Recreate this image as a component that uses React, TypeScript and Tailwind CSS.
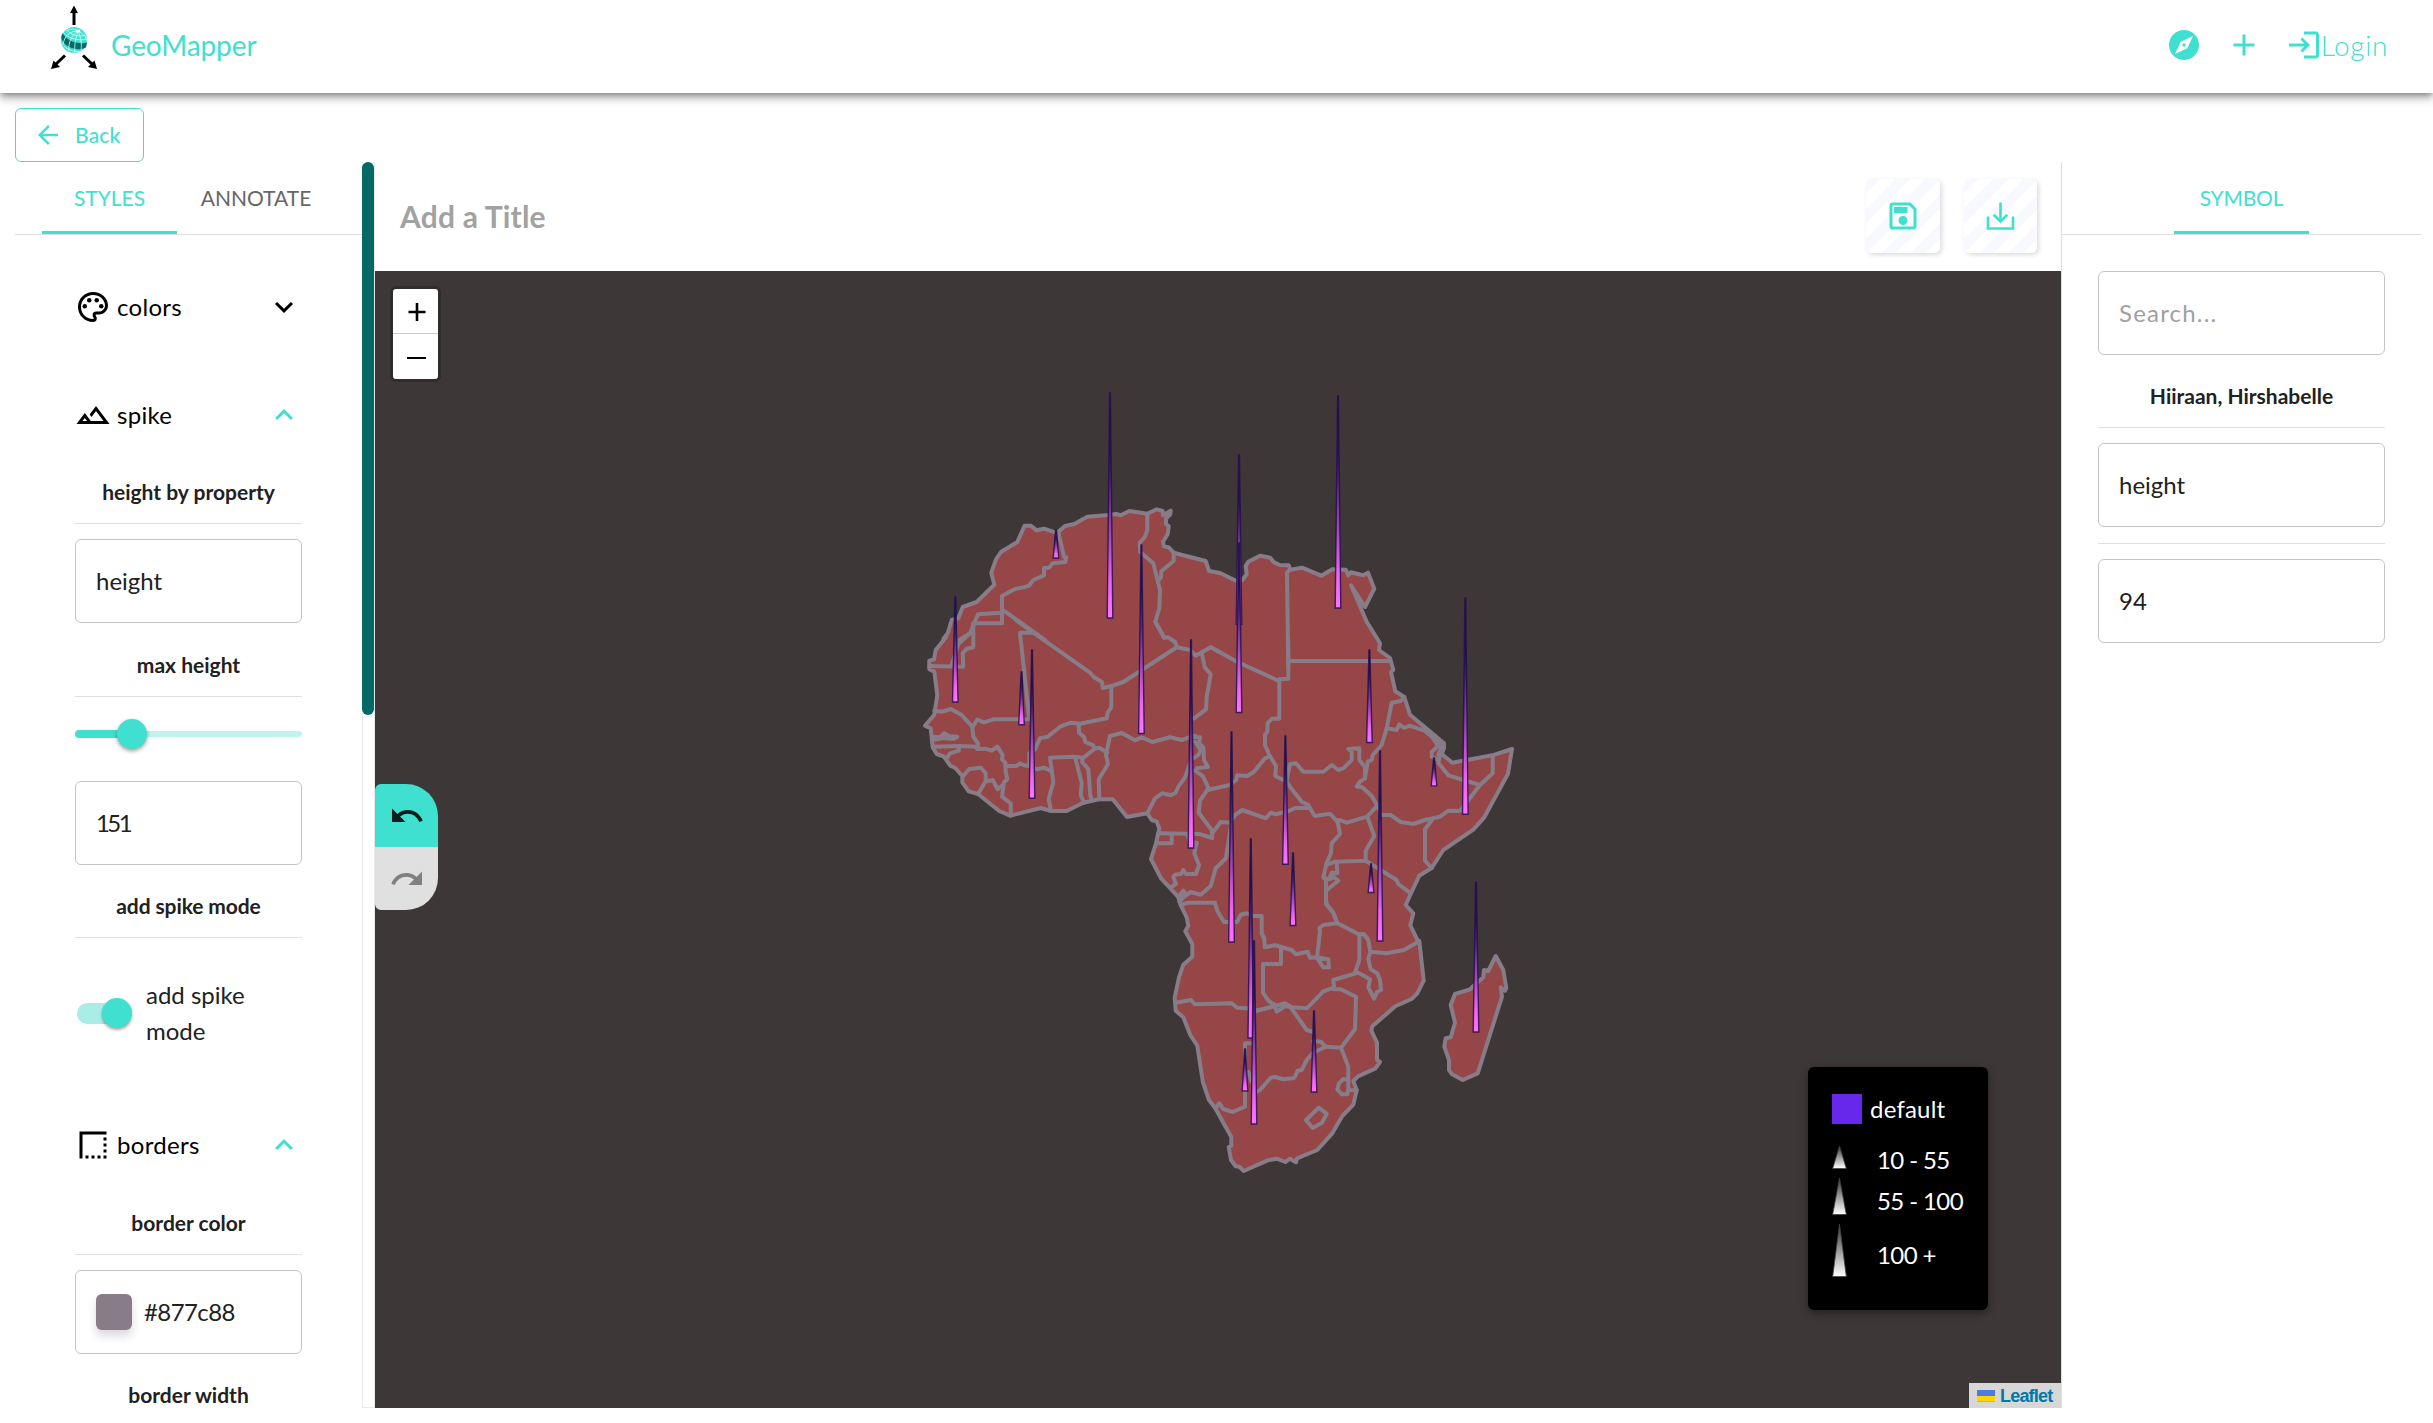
import React from "react";
import {
  MdExplore,
  MdAdd,
  MdLogin,
  MdOutlinePalette,
  MdOutlineLandscape,
  MdBorderStyle,
  MdExpandMore,
  MdExpandLess,
  MdArrowBack,
  MdOutlineSave,
  MdUndo,
  MdRedo,
} from "react-icons/md";

type Tile = [number, number];

// Map geometry is digitised in tiles; every tile unit is a third of a pixel.
const A: Tile = [900, 370];
const B: Tile = [1180, 370];
const C: Tile = [900, 620];
const D: Tile = [1130, 640];
const E: Tile = [1130, 900];
const ORIGIN: Tile = [375, 271];

const pts = ([ox, oy]: Tile, s: string) =>
  s
    .trim()
    .split(/\s+/)
    .map((p) => {
      const [x, y] = p.split(",").map(Number);
      return `${(ox + x / 3 - ORIGIN[0]).toFixed(1)},${(oy + y / 3 - ORIGIN[1]).toFixed(1)}`;
    })
    .join(" ");

const MAINLAND = [
  pts(A, "130,808 143,790 155,750 175,745 188,711 230,696 283,644 274,608 288,568 304,545 352,516 374,467 392,467 410,481 432,476 466,487 475,485 495,468 523,462 562,440 625,435 648,432 662,436 688,423 742,431 770,418 788,423 789,436 812,422 811,433 798,446 798,462 806,468 803,493 789,515 792,529 806,532 821,548 917,573 927,603 960,609"),
  pts(B, "168,632 187,630 200,613 197,588 205,575 240,557 271,563 280,575 299,585 326,586 331,599 366,593 424,617 457,598 497,599 505,616 512,607 550,616 564,608 583,656 555,711 513,646 560,755 600,820 597,840 630,864"),
  pts(D, "790,90 783,96 796,154 823,171 840,224 890,266 942,310 942,325 935,342 967,368 1087,346 1146,327 1134,401 1062,533 1030,569 940,630 905,684 868,707 842,762 827,795 850,820 841,856 863,902"),
  pts(E, "868,122 881,242 862,280 846,296 796,319 727,379 724,392 741,428 741,480 750,486 735,506 684,529 670,543 680,571 670,614 637,648 606,701 562,750 501,775 498,787 480,776 466,786 440,776 413,781 341,813 328,800 317,799 303,780 296,741 304,737 304,711 256,625 237,600 219,548 202,437 181,405 160,352 137,332 134,293 147,232 160,194 187,170 187,132 166,94 175,78 170,52 152,15"),
  pts(D, "144,770 94,716 63,657 78,610 88,565 80,545 65,540 52,520"),
  pts(C, "681,591 638,538 597,538 550,548 500,573 453,573 422,564 330,587 298,573 234,522 206,514 187,487 187,468 166,444 151,437 132,410 110,402 98,382 97,372 92,325 75,317 103,284 112,225 103,155 88,148 88,122 102,118 107,90 138,52"),
].join(" ");

const MADAGASCAR = pts(E, "1097,168 1120,210 1129,265 1125,272 1112,262 1116,290 1043,520 998,540 965,522 957,510 957,480 943,440 947,415 962,412 975,368 962,315 975,282 1020,268 1060,232 1062,210 1075,213");

const BORDERS: [Tile, string][] = [
  [A, "475,485 492,560 499,562 496,576 458,580 447,593 432,594 432,616 400,630 388,646 375,651 345,657 306,678 306,760 223,760"],
  [A, "306,728 234,733 210,790 178,810"],
  [A, "306,718 435,810"],
  [A, "742,431 742,480 735,500 719,518 721,546 760,580 780,660 778,715 766,755 793,803"],
  [A, "821,548 821,573 784,604 783,622 775,632"],
  [C, "220,10 220,82 200,86 188,100 190,140 88,138"],
  [C, "220,10 215,35 175,72 155,135"],
  [C, "347,0 400,38 570,158 582,172 606,186 608,204 634,198 670,186 830,82"],
  [C, "400,38 360,38 388,298 280,298 252,307 232,299 217,322"],
  [C, "103,272 127,275 152,267 185,285 217,320 220,350 235,372 232,387"],
  [C, "97,350 120,352 133,340 147,348 172,350 160,357 130,354 97,360"],
  [C, "98,380 178,378 232,380"],
  [C, "178,378 176,392 150,400 142,412"],
  [C, "232,387 255,386 275,392 292,380 308,405 306,418 316,428 317,455 322,478 312,487 306,530 332,550 332,585"],
  [C, "190,467 208,447 243,443 257,460 257,484 234,522"],
  [C, "257,484 278,480 293,508 308,495"],
  [C, "317,438 350,438 360,430 372,436 388,438 388,400 405,388 420,355 443,350 480,320 512,308 540,311 620,295 623,278 634,262 634,200"],
  [C, "388,436 410,448 432,443 452,452"],
  [C, "536,311 537,338 553,352 556,366 580,376 582,386 598,383 622,398"],
  [C, "582,388 550,413 520,410 450,413 460,487 446,537 453,573"],
  [C, "526,413 545,490 542,525 552,548"],
  [C, "547,415 547,427 565,447 571,527 576,542"],
  [C, "598,538 596,478 624,432 618,405 630,348 665,339 705,361 725,352 757,366 810,352 845,360 885,347"],
  [C, "766,5 793,53 805,52 825,66 832,82 870,90 887,107 932,82 960,97"],
  [D, "242,22 327,68 445,122 448,118 475,116 475,0"],
  [B, "325,895 321,607 331,599"],
  [D, "475,63 780,63"],
  [D, "448,118 448,236 425,236 413,250 412,275 405,285 405,315 418,345 438,378 436,408 470,425 480,440 515,485 535,495 552,525"],
  [D, "215,38 224,82 242,103 230,170 228,208 192,235"],
  [D, "180,290 210,292 207,310 220,322 222,360 234,381 200,385"],
  [D, "195,305 212,330 205,345 190,355"],
  [D, "52,520 75,475 97,460 122,466 137,458 145,440 165,412 180,370"],
  [D, "195,392 218,408 234,440 232,450 210,482 206,518 245,570 247,594 207,582 88,580"],
  [D, "232,450 300,435 318,420 322,406 352,408 372,395 405,355 418,350"],
  [D, "247,580 272,546 300,548 315,525 337,510 408,535 422,518 438,523 478,512 495,504 535,504"],
  [D, "302,560 288,655 257,685 242,738 212,764 182,756 165,768 148,785"],
  [D, "145,770 160,752 168,762 150,780"],
  [D, "78,610 125,610 125,582"],
  [D, "172,582 180,608 200,608 193,640 207,675 198,702 168,702 160,690 153,702 135,704 130,710 138,732 122,742"],
  [D, "152,795 175,788 255,788 262,812 282,846 322,846 332,824 350,820 370,828 395,828 395,880 403,895"],
  [E, "395,100 403,115 404,142 435,136 485,150 498,163 533,155 540,173 560,172 595,178 597,202 580,202 560,172"],
  [E, "453,145 453,192 399,192 399,278 415,302 435,315"],
  [E, "562,165 570,95 568,85 580,75 620,70"],
  [E, "588,0 590,12 610,38 622,70 685,102 702,102 715,120 721,155 770,160 822,150 865,125"],
  [E, "688,102 688,180 675,218"],
  [E, "721,155 715,178 722,208 742,220 750,240 753,270 742,275 732,296 715,262 720,238 685,218 610,240 612,262 578,275 565,290 530,325 485,322 465,310 380,332"],
  [E, "612,268 632,268 678,290 675,388 633,443 587,440 572,425 550,423"],
  [E, "482,322 530,390 550,396"],
  [E, "137,308 183,300 195,313 305,310 322,323 350,325 380,332 435,318 440,335 465,318 485,322"],
  [E, "365,430 345,430 345,620 308,636 280,627 268,610 256,625"],
  [E, "355,515 365,545"],
  [E, "380,575 390,570 422,533 435,531 460,538 493,534 503,512 515,510 530,480 550,458 587,440"],
  [E, "633,443 655,500 655,570 680,571"],
  [E, "655,540 640,537 627,550 622,568 635,583 652,583 655,570"],
  [E, "528,660 566,623 590,641 576,668 548,684 528,660"],
  [D, "588,752 588,792 610,818 622,850"],
  [D, "823,171 812,183 785,188 770,265 755,315 728,345 725,360 713,365 705,415 690,425 680,440 697,442 725,468 742,497 712,530 650,548 630,540 622,545 600,521 555,528"],
  [D, "470,420 480,372 498,370 520,395 580,395 605,375 625,390 640,385 665,360 665,335 655,327 688,325 688,360 705,382 705,415"],
  [D, "770,265 800,270 808,253 823,264 838,257 883,272 905,290 925,318 905,335 905,350 925,360"],
  [D, "883,268 920,300 935,318 925,345"],
  [D, "930,345 925,368 955,406 1000,420 1050,435"],
  [D, "1088,348 1088,400 1050,435 990,513 955,512 930,530 885,540 850,552 812,546 782,525 755,525 742,497"],
  [D, "910,535 885,568 885,662 905,684"],
  [D, "712,530 733,588 707,632 707,662 615,665 590,675"],
  [D, "707,662 800,720 805,732 842,760"],
  [D, "622,540 630,582 605,610 603,640 590,668 580,712 588,720 605,715 612,700"],
  [D, "620,670 622,700 605,698 600,710 612,712 625,722 588,752 588,715"],
  [D, "688,882 700,882 713,898"],
];

// [center x, tip y, base y] in page pixels.
const SPIKES: [number, number, number][] = [
  [1056, 530, 558.5],
  [1110, 393, 618.5],
  [955.3, 597, 702.5],
  [1141.4, 545, 734],
  [1338, 396, 608.5],
  [1239, 455, 624.7],
  [1239, 543, 713],
  [1465.3, 598, 814.7],
  [1191, 640, 848.5],
  [1021.5, 672, 725.3],
  [1032, 650, 798.8],
  [1369.4, 650, 743],
  [1285.4, 736, 864.7],
  [1231.5, 732, 942.5],
  [1434, 758, 786.4],
  [1380, 751, 941.5],
  [1371, 864, 893],
  [1293, 853, 926],
  [1250.8, 839, 1038.5],
  [1476, 882, 1032.5],
  [1254, 941, 1124.5],
  [1245, 1049, 1091.5],
  [1314, 1011, 1092.5],
];

function MapLayer() {
  return (
    <svg className="block h-full w-full" viewBox="0 0 1686 1137">
      <defs>
        <linearGradient id="spike" x1="0" y1="0" x2="0" y2="1">
          <stop offset="0" stopColor="#24104f" />
          <stop offset="0.25" stopColor="#24104f" />
          <stop offset="0.85" stopColor="#f066f0" />
          <stop offset="1" stopColor="#ff70ff" />
        </linearGradient>
      </defs>
      <g fill="#964646" stroke="#877c88" strokeWidth="4" strokeLinejoin="round">
        <polygon points={MAINLAND} />
        <polygon points={MADAGASCAR} />
      </g>
      <g fill="none" stroke="#877c88" strokeWidth="4" strokeLinejoin="round" strokeLinecap="round">
        {BORDERS.map(([tile, s], i) => (
          <polyline key={i} points={pts(tile, s)} />
        ))}
      </g>
      <g fill="url(#spike)" stroke="#24104f" strokeOpacity="0.85" strokeWidth="1.4">
        {SPIKES.map(([x, tip, base], i) => {
          const cx = x - ORIGIN[0];
          const t = tip - ORIGIN[1];
          const b = base - ORIGIN[1];
          return <polygon key={i} points={`${cx - 2.8},${b - 0.5} ${cx - 0.4},${t} ${cx + 0.4},${t} ${cx + 2.8},${b - 0.5}`} />;
        })}
      </g>
    </svg>
  );
}

function Logo() {
  return (
    <svg className="h-[68px] w-[50px]" viewBox="0 0 50 68">
      <g stroke="#000" strokeWidth="3" fill="#000">
        <path d="M25 22V8" />
        <path d="M25 2.500L29 10H21Z" stroke="none" />
        <path d="M16 52.500L6 62" />
        <path d="M2 66L4.500 57.500L11 64Z" stroke="none" />
        <path d="M34 52.500L44 62" />
        <path d="M48 66L45.500 57.500L39 64Z" stroke="none" />
      </g>
      <circle cx="25" cy="37" r="13" fill="#40e0d0" />
      <g fill="none" stroke="#d5fbf6" strokeWidth="0.8">
        <path d="M18 27C22 32 30 34.500 36.500 32M14 29C18 35 29 38.500 38 36M15 43C19 47 25 49 31 48.500" />
      </g>
      <path d="M13.500 30C17 37 28 42 38 39.500L37 44.500C28 49.500 13 43 12.200 34Z" fill="#056a68" />
      <g fill="none" stroke="#d5fbf6" strokeWidth="0.8">
        <path d="M29 28C21 28 15 33 14 42M29 28C23 32 19 39 20 48M29 28C27 34 25 42 26 50M29 28C32 34 33 41 32 47M29 28C34 30 37 34 38 38M29 28C25 25 21 26 17 28" />
      </g>
      <ellipse cx="29" cy="28" rx="2.500" ry="1.500" fill="#fff" />
    </svg>
  );
}

function DownloadIcon() {
  return (
    <svg className="size-[29px]" viewBox="0 0 29 29" fill="none" stroke="#40e0d0" strokeWidth="2.600">
      <path d="M14.500 0.500V19M7.700 12.800L14.500 19.500L21.300 12.800M2 14.500V26.500H27V14.500" />
    </svg>
  );
}

function Heading({ children }: { children: React.ReactNode }) {
  return (
    <div className="flex h-16 items-center justify-center border-b border-[#e0e0e0] text-[21px] font-bold text-[#212121]">
      <span>{children}</span>
    </div>
  );
}

function Field({ children, muted = false }: { children: React.ReactNode; muted?: boolean }) {
  return (
    <div className={`flex h-[84px] items-center rounded-md border border-[#c4c4c4] px-5 text-2xl ${muted ? "tracking-[1.2px] text-[#a0a0a0]" : "text-[#212121]"}`}>
      {children}
    </div>
  );
}

function Section({ icon, label, open = false }: { icon: React.ReactNode; label: string; open?: boolean }) {
  return (
    <div className="flex h-9 items-center text-2xl text-black">
      <span className="text-4xl">{icon}</span>
      <span className="ml-1.5 tracking-[0.3px]">{label}</span>
      <span className={`ml-auto text-4xl ${open ? "text-[#40e0d0]" : "text-black"}`}>{open ? <MdExpandLess /> : <MdExpandMore />}</span>
    </div>
  );
}

function LegendSpike({ h }: { h: number }) {
  return (
    <svg width="15" height={h} viewBox={`0 0 15 ${h}`}>
      <defs>
        <linearGradient id="legendSpike" x1="0" y1="0" x2="0" y2="1">
          <stop offset="0" stopColor="#333" />
          <stop offset="1" stopColor="#fff" />
        </linearGradient>
      </defs>
      <polygon points={`0.7,${h - 0.5} 7.5,0 14.3,${h - 0.5}`} fill="url(#legendSpike)" stroke="#444" strokeWidth="0.8" />
    </svg>
  );
}

const STRIPES =
  "bg-[repeating-linear-gradient(135deg,#f8f8ff_0px,#f8f8ff_10.5px,#ffffff_10.5px,#ffffff_21px)]";

export default function App() {
  return (
    <div className="flex h-[1423px] w-[2433px] flex-col overflow-hidden bg-white font-['Lato',sans-serif]">
      <header className="relative z-10 flex h-[93px] shrink-0 items-center bg-white pr-[45px] pb-[3px] pl-[49px] text-[#40e0d0] shadow-[0_3px_6px_-1px_rgba(0,0,0,0.35),0_6px_9px_rgba(0,0,0,0.22)]">
        <div className="-mt-[17px]">
          <Logo />
        </div>
        <span className="ml-3 text-[28px] tracking-[-0.1px]">GeoMapper</span>
        <MdExplore className="ml-auto size-9" />
        <MdAdd className="ml-6 size-9" />
        <div className="ml-6 flex items-center">
          <MdLogin className="size-9" />
          <span className="-ml-px text-[28px] font-light tracking-[0.6px]">Login</span>
        </div>
      </header>

      <div className="flex h-[69px] shrink-0 items-end pl-[15px]">
        <button className="flex h-[54px] w-[129px] items-center rounded-md border border-[#40e0d0] pl-[17px] text-[21px] text-[#40e0d0]">
          <MdArrowBack className="size-[30px]" />
          <span className="ml-3 font-medium tracking-[0.2px]">Back</span>
        </button>
      </div>

      <main className="flex h-[1246px] shrink-0 pr-3 pl-[15px]">
        <aside className="flex h-full w-[360px] shrink-0 overflow-hidden">
          <div className="flex w-[347px] flex-col">
            <div className="flex h-[73px] shrink-0 border-b border-[#dedede] pl-[27px] text-[21px]">
              <div className="flex w-[135px] items-center justify-center border-b-[3px] border-[#40e0d0] pt-[3px] text-[#40e0d0]">
                STYLES
              </div>
              <div className="flex w-[158px] items-center justify-center border-b-[3px] border-transparent pt-[3px] text-[#666]">
                ANNOTATE
              </div>
            </div>
            <div className="flex h-[1173px] flex-col overflow-hidden pr-[60px] pl-[60px]">
              <div className="mt-[54px]">
                <Section icon={<MdOutlinePalette />} label="colors" />
              </div>
              <div className="mt-[72px]">
                <Section icon={<MdOutlineLandscape />} label="spike" open />
              </div>
              <div className="mt-[27px]">
                <Heading>height by property</Heading>
              </div>
              <div className="mt-[15px]">
                <Field>height</Field>
              </div>
              <div className="mt-[10px]">
                <Heading>max height</Heading>
              </div>
              <div className="mt-[22px] flex h-[30px] items-center">
                <div className="h-2 w-[44px] rounded-l-full bg-[#40e0d0]" />
                <div className="z-10 -mx-0.5 size-[30px] shrink-0 rounded-full bg-[#40e0d0] shadow-[0_2px_4px_rgba(0,0,0,0.4)]" />
                <div className="h-1.5 flex-1 rounded-r-full bg-[#bff3ed]" />
              </div>
              <div className="mt-[32px]">
                <Field>
                  <span className="-tracking-[2.6px]">151</span>
                </Field>
              </div>
              <div className="mt-[9px]">
                <Heading>
                  <span className="tracking-[-0.1px]">add spike mode</span>
                </Heading>
              </div>
              <div className="mt-[39px] flex h-[72px] items-center">
                <div className="ml-0.5 flex h-[21px] w-[51px] items-center justify-end rounded-full bg-[#a8eee6]">
                  <div className="-mr-1 size-[30px] shrink-0 rounded-full bg-[#40e0d0] shadow-[0_2px_3px_rgba(0,0,0,0.35)]" />
                </div>
                <span className="ml-[18px] w-[110px] text-2xl leading-9 text-[#212121]">add spike mode</span>
              </div>
              <div className="mt-[78px]">
                <Section icon={<MdBorderStyle />} label="borders" open />
              </div>
              <div className="mt-[28px]">
                <Heading>border color</Heading>
              </div>
              <div className="mt-[15px]">
                <Field>
                  <span className="size-9 rounded-md bg-[#877c88] shadow-[0_6px_9px_rgba(50,50,93,0.18)]" />
                  <span className="ml-3 tracking-[-0.6px]">#877c88</span>
                </Field>
              </div>
              <div className="mt-[9px] shrink-0">
                <Heading>border width</Heading>
              </div>
            </div>
          </div>
          <div className="h-full w-[13px] border-x border-b border-[#e8e8e8] bg-white">
            <div className="-ml-px h-[553px] w-3 rounded-full bg-[#046865]" />
          </div>
        </aside>

        <section className="flex h-full w-[1686px] shrink-0 flex-col">
          <div className="flex h-[109px] shrink-0 items-center pr-6 pb-px pl-[25px]">
            <span className="text-[30px] font-bold tracking-[0.2px] text-[#a2a2a2]">Add a Title</span>
            <div className={`ml-auto flex size-[74px] items-center justify-center rounded-md shadow-[2px_2px_5px_rgba(0,0,0,0.14)] ${STRIPES}`}>
              <MdOutlineSave className="size-9 text-[#40e0d0]" />
            </div>
            <div className={`ml-6 flex h-[74px] w-[73px] items-center justify-center rounded-md shadow-[2px_2px_5px_rgba(0,0,0,0.14)] ${STRIPES}`}>
              <DownloadIcon />
            </div>
          </div>
          <div className="relative h-[1137px] bg-[#3d3737]">
            <MapLayer />
            <div className="absolute top-[15px] left-[15px] w-[51px] rounded-md border-[3px] border-black/20 bg-clip-padding">
              <div className="flex h-[44px] items-center justify-center rounded-t-[3px] bg-white pt-0.5 pl-0.5">
                <svg className="size-[18px]" viewBox="0 0 18 18" stroke="#000" strokeWidth="2.600">
                  <path d="M9 0V18M0.500 9H17.500" />
                </svg>
              </div>
              <div className="flex h-[46px] items-center justify-center rounded-b-[3px] border-t border-[#ccc] bg-white pt-0.5 pl-0.5">
                <div className="h-0.5 w-[19px] bg-black" />
              </div>
            </div>
            <div className="absolute top-[513px] left-0 flex w-[63px] flex-col">
              <div className="flex h-[63px] items-center justify-center rounded-tl-md rounded-tr-[32px] bg-[#40e0d0]">
                <MdUndo className="size-9 text-[#0c1f1d]" />
              </div>
              <div className="flex h-[63px] items-center justify-center rounded-br-[32px] rounded-bl-md bg-[#e0e0e0]">
                <MdRedo className="size-9 text-[#808080]" />
              </div>
            </div>
            <div className="absolute top-[796px] left-[1433px] flex h-[243px] w-[180px] flex-col rounded-md bg-black pt-[27px] pl-6 text-2xl text-white shadow-[0_3px_9px_rgba(0,0,0,0.4)]">
              <div className="flex h-[30px] items-center">
                <span className="size-[30px] bg-[#6728ec]" />
                <span className="ml-2 tracking-[0.2px]">default</span>
              </div>
              <div className="mt-[22px] flex h-[23px] items-center">
                <LegendSpike h={23} />
                <span className="mt-1 ml-[30px] tracking-[-0.6px]">10 - 55</span>
              </div>
              <div className="mt-[9px] flex h-[37px] items-center">
                <LegendSpike h={37} />
                <span className="mt-2 ml-[30px] tracking-[-0.6px]">55 - 100</span>
              </div>
              <div className="mt-[9px] flex h-[53px] items-center">
                <LegendSpike h={53} />
                <span className="mt-2 ml-[30px] tracking-[-0.6px]">100 +</span>
              </div>
            </div>
            <div className="absolute right-0 bottom-0 flex h-[25px] w-[92px] items-center bg-[#d8d7d7] pl-2">
              <div className="flex h-3 w-[18px] flex-col">
                <div className="h-1.5 bg-[#4c7be1]" />
                <div className="h-1.5 border-b border-[#e0bc00] bg-[#ffd500]" />
              </div>
              <span className="mt-0.5 ml-[5px] font-['Liberation_Sans',sans-serif] text-[18px] font-bold tracking-[-0.8px] text-[#0078a8]">Leaflet</span>
            </div>
          </div>
        </section>

        <aside className="flex h-full flex-1 flex-col border-l border-[#dedede]">
          <div className="flex h-[73px] shrink-0 justify-center border-b border-[#dedede]">
            <div className="flex w-[135px] items-center justify-center border-b-[3px] border-[#40e0d0] pt-[3px] text-[21px] tracking-[-0.2px] text-[#40e0d0]">
              SYMBOL
            </div>
          </div>
          <div className="flex flex-col px-9 pt-9">
            <Field muted>Search...</Field>
            <div className="mt-[9px]">
              <Heading>Hiiraan, Hirshabelle</Heading>
            </div>
            <div className="mt-[15px]">
              <Field>height</Field>
            </div>
            <div className="mt-4 border-b border-[#e0e0e0]" />
            <div className="mt-[15px]">
              <Field>94</Field>
            </div>
          </div>
        </aside>
      </main>
    </div>
  );
}
